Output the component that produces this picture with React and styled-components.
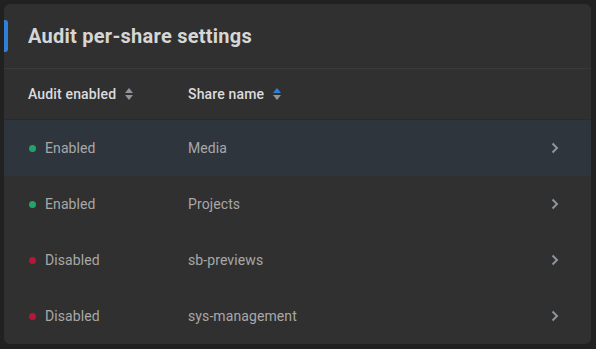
import React from "react";
import styled, { createGlobalStyle } from "styled-components";

const GlobalStyle = createGlobalStyle`
  html, body {
    margin: 0;
    padding: 0;
    background: #212121;
    font-family: Roboto, "Liberation Sans", sans-serif;
  }
`;

const Page = styled.div`
  padding: 4px 5px 5px 4px;
`;

const Card = styled.div`
  background: #303030;
  border-radius: 6px;
  overflow: hidden;
`;

const Header = styled.div`
  position: relative;
  height: 64px;
  display: flex;
  align-items: center;
  padding-left: 24px;
  border-bottom: 1px solid #3a3a3a;
`;

const Accent = styled.span`
  position: absolute;
  left: 0;
  top: 16px;
  width: 4px;
  height: 32px;
  background: #2f80d9;
  border-radius: 0 3px 3px 0;
`;

const Title = styled.h2`
  margin: 0;
  font-size: 20px;
  font-weight: 700;
  color: #d6d6d6;
  letter-spacing: 0.25px;
`;

const Row = styled.div`
  display: grid;
  grid-template-columns: 160px 1fr 40px;
  align-items: center;
  padding-left: 24px;
  height: ${(p) => (p.$head ? "50px" : "56px")};
  background: ${(p) => (p.$active ? "#2f353d" : "transparent")};
  border-bottom: ${(p) => (p.$head ? "1px solid #2a2a2a" : "none")};
`;

const HeadCell = styled.div`
  display: flex;
  align-items: center;
  gap: 8px;
  font-size: 14px;
  font-weight: 500;
  color: #dcdcdc;
  letter-spacing: 0.15px;
`;

const Cell = styled.div`
  display: flex;
  align-items: center;
  gap: 9px;
  font-size: 14px;
  color: #a8a8a8;
  letter-spacing: 0.1px;
`;

const Dot = styled.span`
  width: 7px;
  height: 7px;
  margin-left: 1px;
  border-radius: 50%;
  background: ${(p) => (p.$on ? "#23a26a" : "#b3173c")};
`;

const Chevron = styled.div`
  display: flex;
  align-items: center;
`;

function SortIcon({ up }) {
  return (
    <svg width="10" height="14" viewBox="0 0 10 14">
      <path d="M5 1 L9 6 H1 Z" fill={up ? "#2f80d9" : "#8e959d"} />
      <path d="M5 13 L9 8 H1 Z" fill="#8e959d" />
    </svg>
  );
}

const rows = [
  { on: true, name: "Media" },
  { on: true, name: "Projects" },
  { on: false, name: "sb-previews" },
  { on: false, name: "sys-management" },
];

export default function App() {
  return (
    <Page>
      <GlobalStyle />
      <Card>
        <Header>
          <Accent />
          <Title>Audit per-share settings</Title>
        </Header>
        <Row $head>
          <HeadCell>
            Audit enabled <SortIcon />
          </HeadCell>
          <HeadCell>
            Share name <SortIcon up />
          </HeadCell>
          <div />
        </Row>
        {rows.map((r, i) => (
          <Row key={r.name} $active={i === 0}>
            <Cell>
              <Dot $on={r.on} />
              {r.on ? "Enabled" : "Disabled"}
            </Cell>
            <Cell>{r.name}</Cell>
            <Chevron>
              <svg width="8" height="12" viewBox="0 0 8 12">
                <path d="M1.5 1.5 L6 6 L1.5 10.5" fill="none" stroke="#8e959d" strokeWidth="2" />
              </svg>
            </Chevron>
          </Row>
        ))}
      </Card>
    </Page>
  );
}
